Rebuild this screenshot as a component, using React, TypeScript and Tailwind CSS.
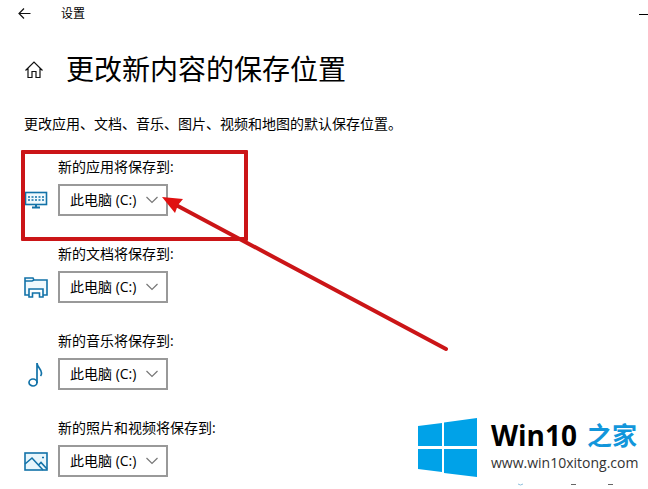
import React from 'react';

const LOCATIONS = [
  { id: 'apps', label: '新的应用将保存到:', icon: MonitorIcon, marked: true },
  { id: 'documents', label: '新的文档将保存到:', icon: FolderIcon, marked: false },
  { id: 'music', label: '新的音乐将保存到:', icon: NoteIcon, marked: false },
  { id: 'pictures', label: '新的照片和视频将保存到:', icon: PictureIcon, marked: false },
];

export default function App() {
  return (
    <div className="relative min-h-screen overflow-hidden bg-white font-['Open_Sans','Noto_Sans_CJK_SC',sans-serif] text-sm text-black">
      <header className="flex h-7 items-center justify-between pl-4">
        <div className="flex items-center gap-7">
          <button type="button" aria-label="返回" className="p-0.5">
            <BackIcon />
          </button>
          <span className="text-xs">设置</span>
        </div>
        <button type="button" aria-label="最小化" className="flex w-[9px] items-center">
          <span className="h-px w-full bg-black" />
        </button>
      </header>

      <main className="px-6 pt-5">
        <div className="flex items-center gap-[22px]">
          <a href="#home" aria-label="主页">
            <HomeIcon />
          </a>
          <h1 className="text-[28px] leading-[42px]">更改新内容的保存位置</h1>
        </div>
        <p className="mt-6 leading-5">更改应用、文档、音乐、图片、视频和地图的默认保存位置。</p>

        <div className="mt-[23px] flex flex-col gap-7">
          {LOCATIONS.map((item) => (
            <LocationRow key={item.id} {...item} />
          ))}
        </div>
      </main>

      <PointerArrow />
      <Watermark />
    </div>
  );
}

interface LocationRowProps {
  id: string;
  label: string;
  icon: React.FC;
  marked: boolean;
}

function LocationRow({ id, label, icon: Icon, marked }: LocationRowProps) {
  return (
    <div className="relative flex items-end gap-[10px]">
      <div className="flex h-8 w-6 items-center justify-center">
        <Icon />
      </div>
      <div className="flex flex-col items-start gap-[7px]">
        <label htmlFor={id} className="leading-5">{label}</label>
        <div className="relative">
          <select
            id={id}
            className="h-8 w-[110px] appearance-none border-2 border-[#999] bg-white pl-[10px] text-sm outline-none"
          >
            <option>此电脑 (C:)</option>
          </select>
          <svg
            className="pointer-events-none absolute top-3 right-[10px]"
            width="12"
            height="8"
            viewBox="0 0 12 8"
            fill="none"
            stroke="#777"
            strokeWidth="1.2"
          >
            <path d="M0.5 1L6 6.5L11.5 1" />
          </svg>
        </div>
      </div>
      {marked && (
        <div className="pointer-events-none absolute -top-[7px] -left-[3px] h-[91px] w-[227px] rounded-[1px] border-4 border-[#cb1517]" />
      )}
    </div>
  );
}

function PointerArrow() {
  return (
    <svg
      className="pointer-events-none absolute top-[190px] left-[160px]"
      width="292"
      height="164"
      viewBox="160 190 292 164"
    >
      <path d="M176 205L446 349" stroke="#cb1517" strokeWidth="4" strokeLinecap="round" />
      <path d="M162 197L183 199L178 205L175 213Z" fill="#e01010" />
    </svg>
  );
}

function Watermark() {
  return (
    <div className="absolute right-0 bottom-0 flex h-[76px] w-[231px] flex-col bg-white">
      <div className="flex items-start gap-[14px] pt-1">
        <svg width="60" height="62" viewBox="0 0 60 62" fill="#00a2e8">
          <path d="M1 9L25 6V29H1ZM27 5.5L60 1V29H27ZM1 32H25V55L1 52ZM27 32H60V60L27 56Z" />
        </svg>
        <div className="flex flex-col">
          <div className="flex items-center gap-[10px] leading-9 font-bold">
            <span className="text-[28px]">Win10</span>
            <span className="text-[25px] text-[#1296db]">之家</span>
          </div>
          <a href="#site" className="text-sm leading-5 text-[#333]">www.win10xitong.com</a>
        </div>
      </div>
      <svg className="absolute right-0 bottom-0" width="148" height="8" viewBox="0 0 148 8">
        <path d="M18 3Q20.5 5 23 3" fill="none" stroke="#8fc0dc" />
        <path d="M71 3.5H76M108 3.5H113" stroke="#666" />
      </svg>
    </div>
  );
}

function BackIcon() {
  return (
    <svg width="13" height="12" viewBox="0 0 13 12" fill="none" stroke="#111" strokeWidth="1.2">
      <path d="M12.5 5.5H1M6 0.5L1 5.5L6 10.5" />
    </svg>
  );
}

function HomeIcon() {
  return (
    <svg width="20" height="18" viewBox="0 0 20 18" fill="none" stroke="#111" strokeWidth="1.2">
      <path d="M1.5 10.5L10 2L18.500 10.5M4 8.5V17.500H8V11.500H12V17.500H16V8.5" />
    </svg>
  );
}

function MonitorIcon() {
  return (
    <svg width="24" height="20" viewBox="0 0 24 20" fill="none" stroke="#1272a8" strokeWidth="1.6">
      <rect x="1.5" y="2.500" width="21" height="12" fill="#f0f9fd" />
      <path d="M4 7H20M4 10H20" strokeDasharray="2 1.500" />
      <path d="M12 14V17M8 17.500H16" strokeWidth="2" />
    </svg>
  );
}

function FolderIcon() {
  return (
    <svg width="24" height="22" viewBox="0 0 24 22" fill="none" stroke="#1272a8" strokeWidth="1.6">
      <path d="M5 19H1V2H9L10 4H23V19H19M1 5H8L10 4" fill="#f0f9fd" />
      <path d="M5 21V13H19V21H15.500V17H8.500V21Z" fill="#fff" />
    </svg>
  );
}

function NoteIcon() {
  return (
    <svg width="24" height="26" viewBox="0 0 24 26" fill="none" stroke="#1272a8" strokeWidth="1.7">
      <ellipse cx="9" cy="21.500" rx="4" ry="3.500" />
      <path d="M13 22V2C13 6 17.500 8 17.500 12Q17.500 14 16.500 15" />
    </svg>
  );
}

function PictureIcon() {
  return (
    <svg width="24" height="20" viewBox="0 0 24 20" fill="none" stroke="#1272a8" strokeWidth="1.6">
      <rect x="1" y="2" width="22" height="17" fill="#e8f6fc" />
      <path d="M1 13L8 7L19 19M14.500 14L17 11.500L23 18" />
      <path d="M18 6.500H20" />
    </svg>
  );
}
